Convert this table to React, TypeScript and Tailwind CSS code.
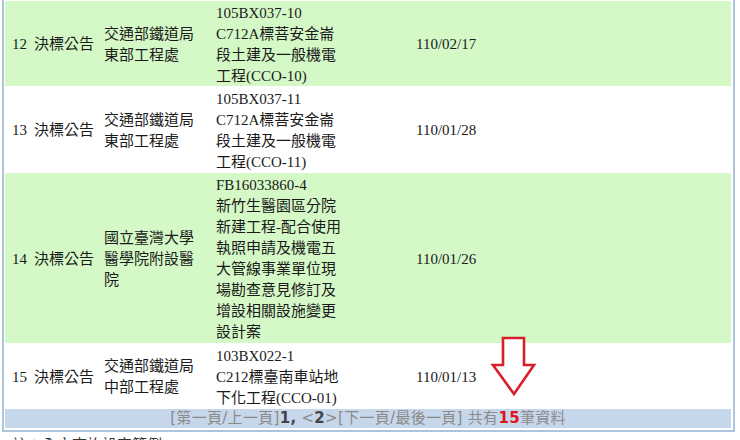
import React from "react";

type Row = {
  no: string;
  kind: string;
  org: string;
  title: string[];
  date: string;
  green: boolean;
  h: string;
};

const rows: Row[] = [
  {
    no: "12",
    kind: "決標公告",
    org: "交通部鐵道局東部工程處",
    title: ["105BX037-10", "C712A標菩安金崙段土建及一般機電工程(CCO-10)"],
    date: "110/02/17",
    green: true,
    h: "h-[85px]",
  },
  {
    no: "13",
    kind: "決標公告",
    org: "交通部鐵道局東部工程處",
    title: ["105BX037-11", "C712A標菩安金崙段土建及一般機電工程(CCO-11)"],
    date: "110/01/28",
    green: false,
    h: "h-[85px]",
  },
  {
    no: "14",
    kind: "決標公告",
    org: "國立臺灣大學醫學院附設醫院",
    title: [
      "FB16033860-4",
      "新竹生醫園區分院新建工程-配合使用執照申請及機電五大管線事業單位現場勘查意見修訂及增設相關設施變更設計案",
    ],
    date: "110/01/26",
    green: true,
    h: "h-[170px]",
  },
  {
    no: "15",
    kind: "決標公告",
    org: "交通部鐵道局中部工程處",
    title: ["103BX022-1", "C212標臺南車站地下化工程(CCO-01)"],
    date: "110/01/13",
    green: false,
    h: "h-[64px]",
  },
];

function ResultRow({ row }: { row: Row }) {
  return (
    <div
      className={`flex items-center pt-[2px] ${row.h} ${row.green ? "bg-[#d5f8c7]" : "bg-white"}`}
    >
      <div className="w-[26px] shrink-0 pl-[7px]">{row.no}</div>
      <div className="w-[69px] shrink-0 pl-[3px]">{row.kind}</div>
      <div className="w-[112px] shrink-0 pl-[4px] pr-[12px]">{row.org}</div>
      <div className="w-[138px] shrink-0 pl-[4px] pr-[6px]">
        {row.title.map((t) => (
          <div key={t}>{t}</div>
        ))}
      </div>
      <div className="pl-[66px]">{row.date}</div>
    </div>
  );
}

function Pager() {
  return (
    <div className="flex h-[19px] items-center justify-center bg-[#c6d7eb] font-['DejaVu_Sans','Noto_Sans_CJK_TC',sans-serif] text-[15px] leading-[19px] tracking-[0.3px] text-[#8a8a8a]">
      <span>
        [第一頁/上一頁]<b className="text-[#444]">1</b>
        <b className="text-[#444]">,</b> &lt;<b className="text-[#444]">2</b>&gt;[下一頁/最後一頁] 共有
        <b className="text-[#e0141c]">15</b>筆資料
      </span>
    </div>
  );
}

function DownArrow() {
  return (
    <svg
      className="absolute left-[488px] top-[333px]"
      width="52"
      height="66"
      viewBox="488 333 52 66"
    >
      <polygon
        points="503,338 524,338 524,365 534,365 514,394 493,365 503,365"
        fill="white"
        stroke="#d8202b"
        strokeWidth="2.6"
        strokeLinejoin="miter"
      />
    </svg>
  );
}

export default function App() {
  return (
    <div className="relative h-[440px] w-[740px] overflow-hidden bg-white font-['Liberation_Serif','Noto_Sans_CJK_TC',serif] text-[15px] leading-[21px] text-[#1a1a1a]">
      <div className="ml-[2px] w-[733px] border-x-2 border-b-2 border-[#aec3dc] pt-[1px] pl-[1px] pr-[2px] pb-[2px]">
        <div className="flex flex-col gap-[1px]">
          {rows.map((r) => (
            <ResultRow key={r.no} row={r} />
          ))}
          <Pager />
        </div>
      </div>
      <div className="pl-[12px] pt-[1px] font-['Noto_Sans_CJK_TC',sans-serif] text-[15px] leading-[21px] text-[#333]">
        註：全文查詢設定範例
      </div>
      <DownArrow />
    </div>
  );
}
